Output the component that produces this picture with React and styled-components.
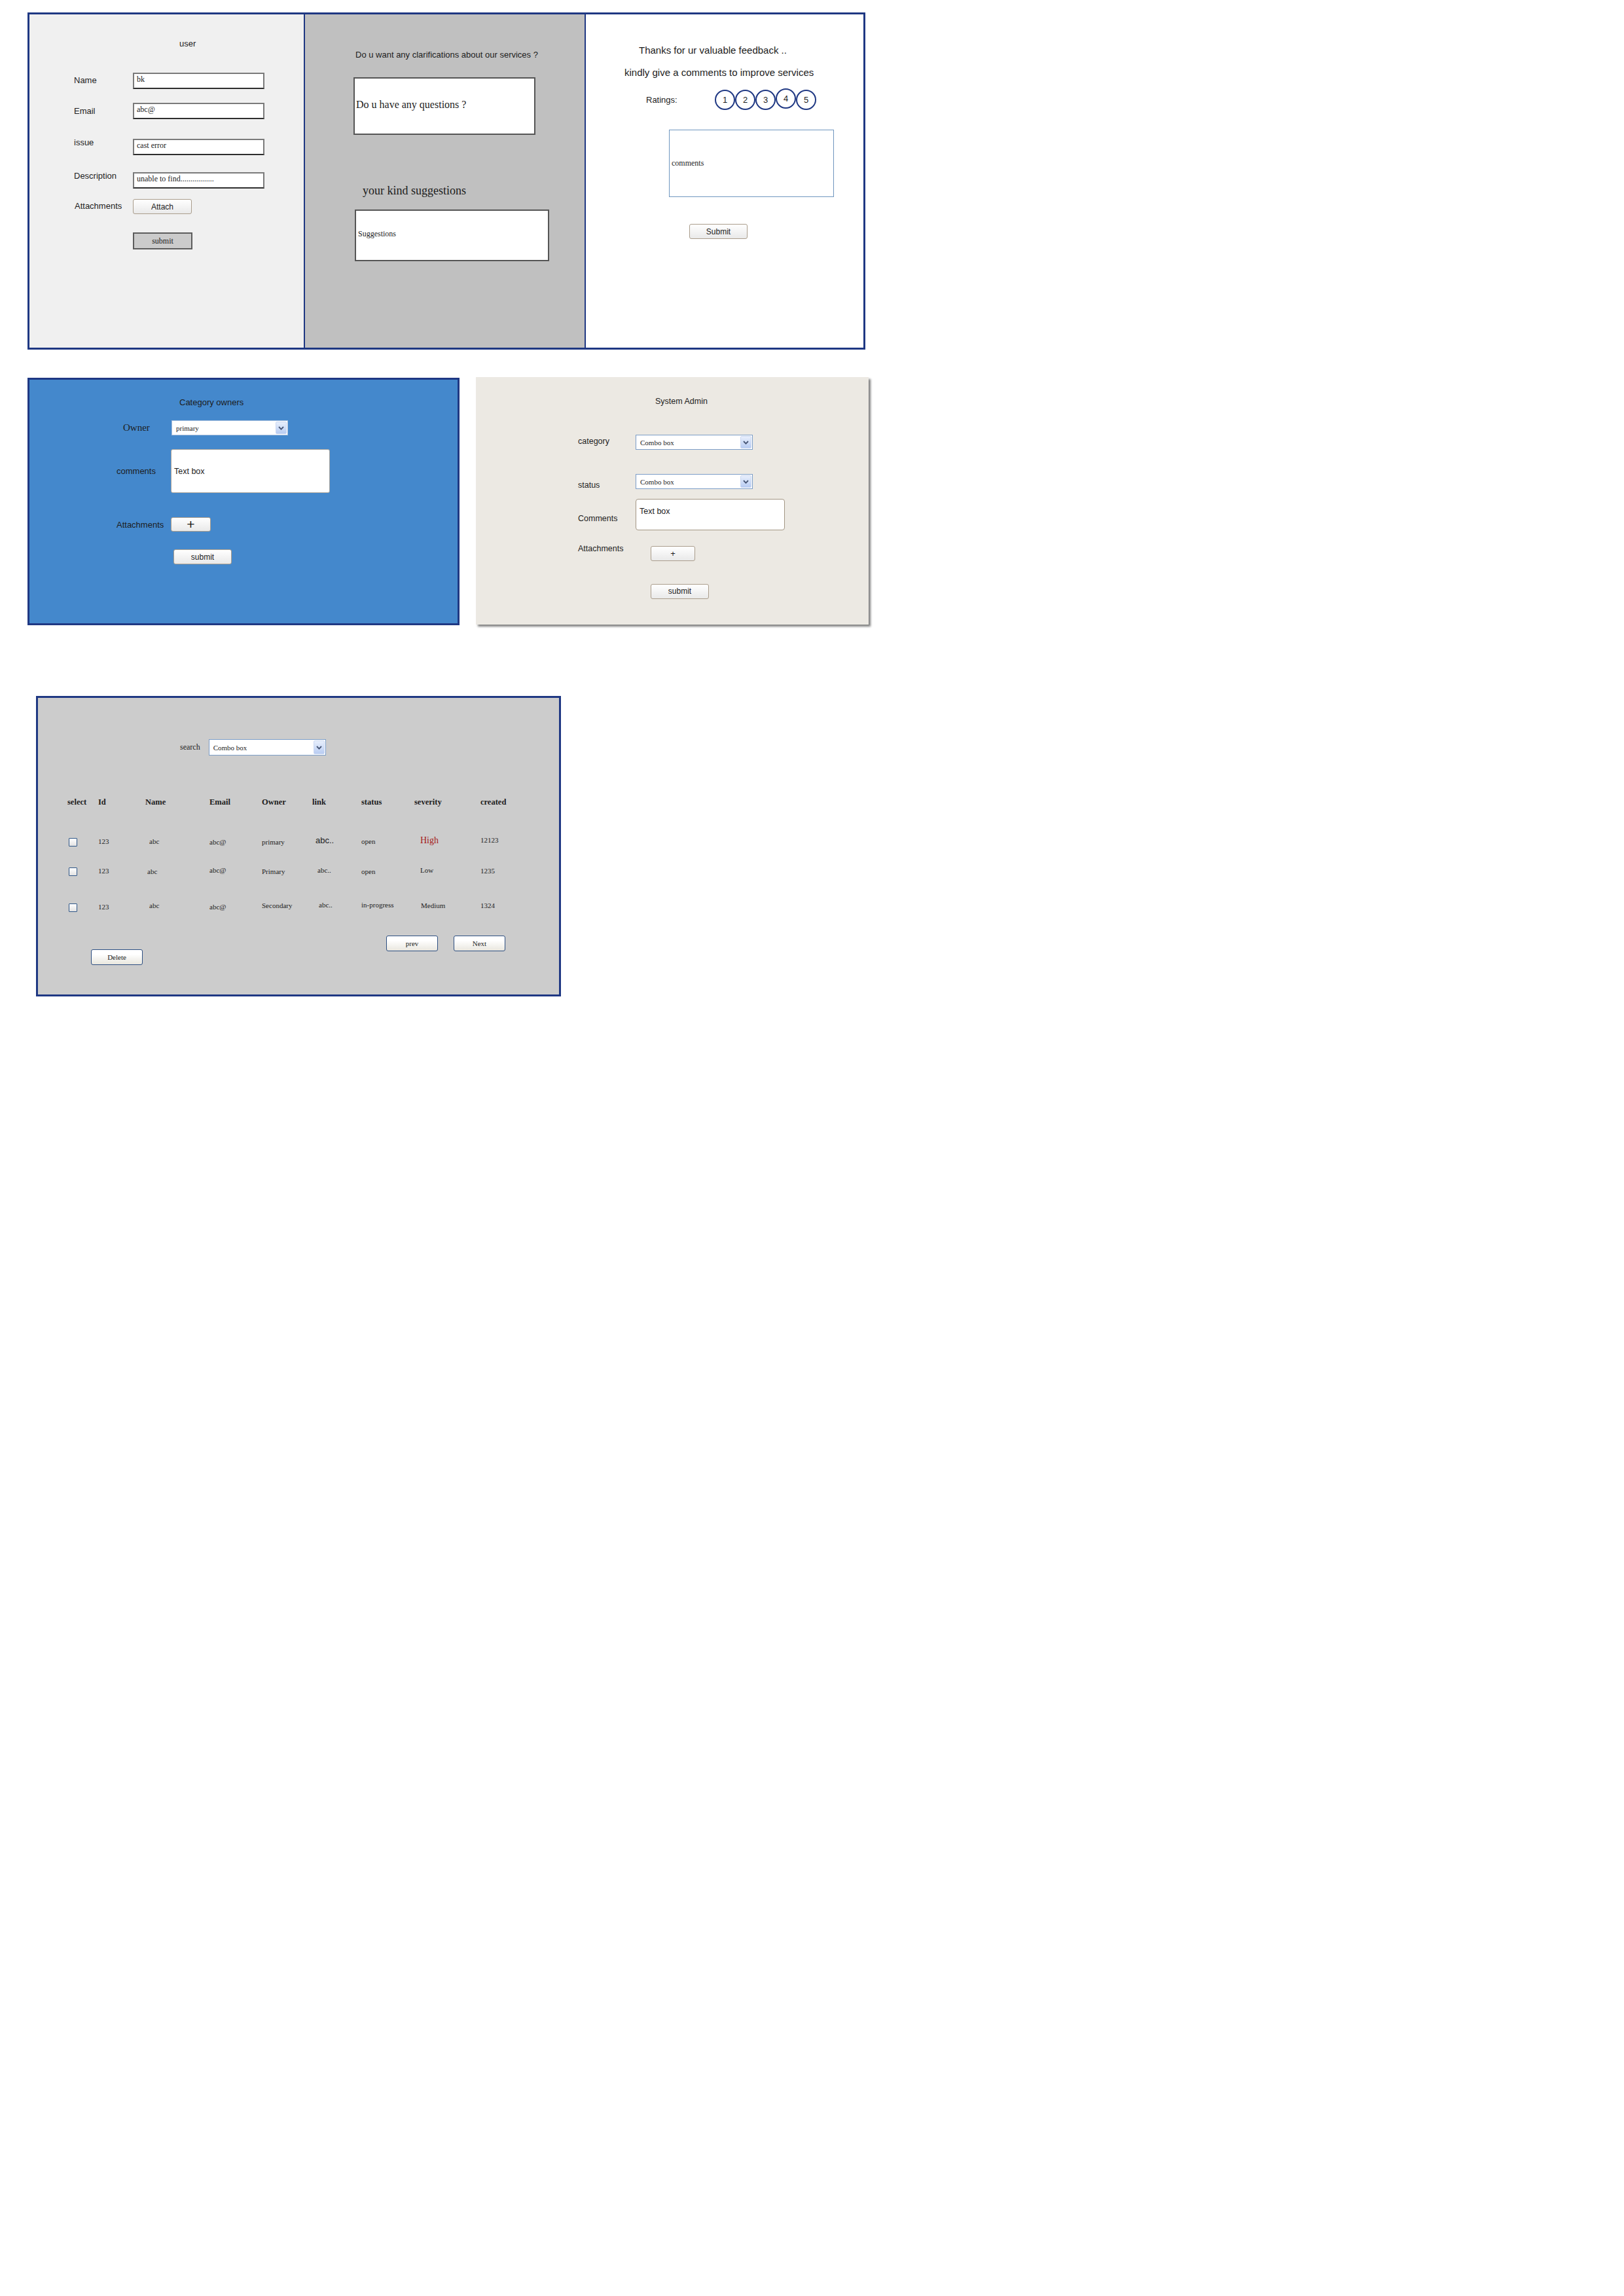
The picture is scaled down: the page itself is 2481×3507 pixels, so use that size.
import React from "react";
import styled, { createGlobalStyle, css } from "styled-components";

const SANS = `"Liberation Sans", Arial, sans-serif`;
const SERIF = `"Liberation Serif", "Times New Roman", serif`;
const NAVY = "#1f3883";

const GlobalStyle = createGlobalStyle`
  html, body {
    margin: 0;
    background: #fff;
  }
  body {
    font-family: ${SANS};
    color: #1c1c1c;
  }
  *, *::before, *::after {
    box-sizing: border-box;
  }
`;

const Page = styled.div`
  width: 2481px;
  min-height: 3507px;
  padding: 19px 0 0 42px;
  display: flex;
  flex-direction: column;
  align-items: flex-start;
`;

/* ---------- shared bits ---------- */

const Caption = styled.p`
  margin: ${(p) => p.$mt || 0}px 0 0 ${(p) => p.$ml || 0}px;
  font-family: ${(p) => (p.$serif ? SERIF : SANS)};
  font-size: ${(p) => p.$size || 13}px;
  line-height: ${(p) => p.$lh || 15}px;
  white-space: nowrap;
`;

const PushButton = styled.div`
  width: ${(p) => p.$w}px;
  height: ${(p) => p.$h}px;
  margin: ${(p) => p.$mt || 0}px 0 0 ${(p) => p.$ml || 0}px;
  display: flex;
  align-items: center;
  justify-content: center;
  flex-shrink: 0;
  font-family: ${(p) => (p.$serif ? SERIF : SANS)};
  font-size: ${(p) => p.$size || 12}px;
  color: #1c1c1c;
  ${(p) =>
    p.$variant === "gray" &&
    css`
      background: #cbcbcb;
      border: 2px solid #5c5c5c;
    `}
  ${(p) =>
    p.$variant === "tan" &&
    css`
      background: linear-gradient(#ffffff, #e9e9e9);
      border: 1px solid #aa9d8c;
      border-radius: 3px;
    `}
  ${(p) =>
    p.$variant === "blue" &&
    css`
      background: linear-gradient(#ffffff 30%, #e8e6de);
      border: 1.5px solid #2d4f82;
      border-radius: 3px;
    `}
`;

const ComboShell = styled.div`
  display: flex;
  align-items: stretch;
  width: ${(p) => p.$w}px;
  height: ${(p) => p.$h}px;
  padding: 1px;
  background: #fff;
  border: ${(p) => p.$bw || 1}px solid ${(p) => p.$border || "#7f9dc6"};
  flex-shrink: 0;
`;

const ComboText = styled.span`
  flex: 1;
  display: flex;
  align-items: center;
  padding-left: 5px;
  font-family: ${SERIF};
  font-size: 11px;
  color: #222;
`;

const ComboArrow = styled.span`
  width: 17px;
  display: flex;
  align-items: center;
  justify-content: center;
  background: linear-gradient(#e8effc, #b8ccf2);
  border: 1px solid #cbd8f2;
  border-radius: 2px;
`;

const Combo = ({ value, w = 179, h = 23, border, bw }) => (
  <ComboShell $w={w} $h={h} $border={border} $bw={bw}>
    <ComboText>{value}</ComboText>
    <ComboArrow>
      <svg width="9" height="6" viewBox="0 0 9 6">
        <polyline
          points="1,1 4.5,4.6 8,1"
          fill="none"
          stroke="#475675"
          strokeWidth="1.8"
        />
      </svg>
    </ComboArrow>
  </ComboShell>
);

/* ---------- top frame ---------- */

const TopFrame = styled.section`
  display: grid;
  grid-template-columns: 421px 429px 424px;
  width: 1280px;
  height: 515px;
  border: 3px solid ${NAVY};
`;

const Column = styled.div`
  display: flex;
  flex-direction: column;
  align-items: flex-start;
  background: ${(p) => p.$bg};
  border-right: ${(p) => (p.$divider ? `2px solid ${NAVY}` : "none")};
`;

const FormRow = styled.div`
  display: flex;
  align-items: ${(p) => (p.$center ? "center" : "flex-start")};
  margin: ${(p) => p.$mt || 0}px 0 0 ${(p) => p.$ml || 0}px;
`;

const FieldLabel = styled.span`
  width: ${(p) => p.$w}px;
  margin-top: ${(p) => p.$dy || 0}px;
  padding-left: ${(p) => p.$pl || 0}px;
  font-family: ${(p) => (p.$serif ? SERIF : SANS)};
  font-size: ${(p) => p.$size || 13}px;
  line-height: ${(p) => p.$lh || 15}px;
  flex-shrink: 0;
  white-space: nowrap;
`;

const SketchInput = styled.div`
  width: 201px;
  height: 25px;
  padding: 1px 0 0 4px;
  background: #fff;
  border: 2px solid #7a7a7a;
  border-bottom-color: #2e2e2e;
  font-family: ${SERIF};
  font-size: 12px;
  line-height: 14px;
  white-space: nowrap;
`;

const NoteBox = styled.div`
  width: ${(p) => p.$w}px;
  height: ${(p) => p.$h}px;
  margin: ${(p) => p.$mt}px 0 0 ${(p) => p.$ml}px;
  display: flex;
  align-items: center;
  padding: 0 0 ${(p) => p.$pb || 0}px ${(p) => p.$pl || 2}px;
  background: #fff;
  border: ${(p) => p.$border || "2px solid #555"};
  border-radius: ${(p) => p.$radius || 0}px;
  font-family: ${(p) => (p.$sans ? SANS : SERIF)};
  font-size: ${(p) => p.$size}px;
  white-space: nowrap;
`;

const RatingRow = styled.div`
  display: flex;
  align-items: center;
  margin: 18.5px 0 0 92px;
`;

const Circles = styled.div`
  display: flex;
`;

const Circle = styled.span`
  width: 31px;
  height: 31px;
  margin-top: ${(p) => p.$dy || 0}px;
  border-radius: 50%;
  border: 2.5px solid ${NAVY};
  display: flex;
  align-items: center;
  justify-content: center;
  font-size: 13px;
  color: #1c1c1c;
  background: #fff;
`;

const UserColumn = () => (
  <Column $bg="#f0f0f0" $divider>
    <Caption $mt={36.5} $ml={229}>
      user
    </Caption>
    <FormRow $mt={37.5} $ml={68}>
      <FieldLabel $w={90} $dy={3.5}>Name</FieldLabel>
      <SketchInput>bk</SketchInput>
    </FormRow>
    <FormRow $mt={21} $ml={68}>
      <FieldLabel $w={90} $dy={4.5}>Email</FieldLabel>
      <SketchInput>abc@</SketchInput>
    </FormRow>
    <FormRow $mt={30} $ml={68}>
      <FieldLabel $w={90} $dy={-2.5}>issue</FieldLabel>
      <SketchInput>cast error</SketchInput>
    </FormRow>
    <FormRow $mt={26} $ml={68}>
      <FieldLabel $w={90} $dy={-2.5}>Description</FieldLabel>
      <SketchInput>unable to find.................</SketchInput>
    </FormRow>
    <FormRow $mt={16} $ml={69}>
      <FieldLabel $w={89} $dy={2.5}>Attachments</FieldLabel>
      <PushButton $variant="tan" $w={90} $h={23}>
        Attach
      </PushButton>
    </FormRow>
    <PushButton $variant="gray" $serif $w={91} $h={26} $mt={28} $ml={158}>
      submit
    </PushButton>
  </Column>
);

const QuestionColumn = () => (
  <Column $bg="#c0c0c0" $divider>
    <Caption $mt={53.5} $ml={77}>
      Do u want any clarifications about our services ?
    </Caption>
    <NoteBox $w={278} $h={88} $mt={27.5} $ml={74} $size={16} $pb={4}>
      Do u have any questions ?
    </NoteBox>
    <Caption $serif $size={18} $lh={21} $mt={74.5} $ml={88}>
      your kind suggestions
    </Caption>
    <NoteBox $w={297} $h={79} $mt={18.5} $ml={76} $size={12} $pl={3} $pb={4}>
      Suggestions
    </NoteBox>
  </Column>
);

const FeedbackColumn = () => (
  <Column $bg="#ffffff">
    <Caption $size={15} $lh={17} $mt={45.5} $ml={81}>
      Thanks for ur valuable feedback ..
    </Caption>
    <Caption $size={15} $lh={17} $mt={17} $ml={59}>
      kindly give a comments to improve services
    </Caption>
    <RatingRow>
      <FieldLabel $w={105}>Ratings:</FieldLabel>
      <Circles>
        {[1, 2, 3, 4, 5].map((n) => (
          <Circle key={n} $dy={n === 4 ? -2 : 0}>
            {n}
          </Circle>
        ))}
      </Circles>
    </RatingRow>
    <NoteBox
      $w={252}
      $h={103}
      $mt={30}
      $ml={127}
      $size={12}
      $pl={3}
      $border="1px solid #6f96bf"
    >
      comments
    </NoteBox>
    <PushButton $variant="tan" $w={89} $h={23} $mt={41} $ml={158}>
      Submit
    </PushButton>
  </Column>
);

/* ---------- middle row ---------- */

const MiddleRow = styled.div`
  display: flex;
  gap: 25px;
  margin-top: 43px;
`;

const OwnersPanel = styled.section`
  width: 660px;
  height: 378px;
  display: flex;
  flex-direction: column;
  align-items: flex-start;
  background: #4488cc;
  border: 3px solid ${NAVY};
`;

const AdminPanel = styled.section`
  width: 600px;
  height: 378px;
  margin-top: -1px;
  display: flex;
  flex-direction: column;
  align-items: flex-start;
  background: #ece9e3;
  box-shadow: 3px 3px 3px rgba(0, 0, 0, 0.5);
`;

const OwnersCard = () => (
  <OwnersPanel>
    <Caption $mt={26.5} $ml={229}>
      Category owners
    </Caption>
    <FormRow $center $mt={20.5} $ml={133}>
      <FieldLabel $w={84} $pl={10} $serif $size={15} $lh={17}>
        Owner
      </FieldLabel>
      <Combo value="primary" w={178} border="#a9bfdc" />
    </FormRow>
    <FormRow $center $mt={21} $ml={133}>
      <FieldLabel $w={83}>comments</FieldLabel>
      <NoteBox
        $w={243}
        $h={67}
        $mt={0}
        $ml={0}
        $sans
        $size={12.5}
        $pl={4}
        $radius={3}
        $border="1px solid #a8a49c"
      >
        Text box
      </NoteBox>
    </FormRow>
    <FormRow $center $mt={37} $ml={133}>
      <FieldLabel $w={83}>Attachments</FieldLabel>
      <PushButton $variant="tan" $w={61} $h={22} $size={21}>
        +
      </PushButton>
    </FormRow>
    <PushButton $variant="tan" $w={89} $h={23} $mt={27} $ml={220}>
      submit
    </PushButton>
  </OwnersPanel>
);

const AdminCard = () => (
  <AdminPanel>
    <Caption $size={12.5} $mt={29.5} $ml={274}>
      System Admin
    </Caption>
    <FormRow $mt={43.5} $ml={156}>
      <FieldLabel $w={88} $size={12.5} $dy={2.5}>
        category
      </FieldLabel>
      <Combo value="Combo box" w={179} bw={1.5} border="#7b9dc7" />
    </FormRow>
    <FormRow $mt={37} $ml={156}>
      <FieldLabel $w={88} $size={12.5} $dy={9.5}>
        status
      </FieldLabel>
      <Combo value="Combo box" w={179} bw={1.5} border="#7b9dc7" />
    </FormRow>
    <FormRow $mt={13} $ml={156}>
      <FieldLabel $w={88} $size={12.5} $dy={23.5}>
        Comments
      </FieldLabel>
      <NoteBox
        $w={228}
        $h={48}
        $mt={0}
        $ml={0}
        $sans
        $size={12.5}
        $pl={5}
        $pb={10}
        $radius={4}
        $border="1px solid #a39684"
      >
        Text box
      </NoteBox>
    </FormRow>
    <FormRow $mt={24} $ml={156}>
      <FieldLabel $w={88} $size={12.5} $dy={-2.5}>
        Attachments
      </FieldLabel>
      <PushButton $variant="tan" $w={68} $h={23} $ml={23} $size={13}>
        +
      </PushButton>
    </FormRow>
    <PushButton $variant="tan" $w={89} $h={23} $mt={35} $ml={267}>
      submit
    </PushButton>
  </AdminPanel>
);

/* ---------- issue list ---------- */

const ListPanel = styled.section`
  width: 802px;
  height: 459px;
  margin: 108px 0 0 13px;
  display: flex;
  flex-direction: column;
  align-items: flex-start;
  background: #cccccc;
  border: 3px solid ${NAVY};
`;

const SearchRow = styled.div`
  display: flex;
  align-items: center;
  margin: 63px 0 0 217px;
`;

const SearchLabel = styled.span`
  margin-right: 13px;
  font-family: ${SERIF};
  font-size: 12px;
`;

const COLS = "47px 72px 98px 80px 77px 75px 81px 101px 80px";

const TableRow = styled.div`
  display: grid;
  grid-template-columns: ${COLS};
  height: ${(p) => p.$h}px;
  margin: ${(p) => p.$mt}px 0 0 45px;
`;

const HeadCell = styled.span`
  font-family: ${SERIF};
  font-weight: bold;
  font-size: 12.5px;
  line-height: 15px;
  white-space: nowrap;
`;

const DataCell = styled.span`
  height: 20px;
  padding-top: ${(p) => (20 - p.$size * 1.2) / 2 + (p.$dy || 0)}px;
  padding-left: ${(p) => p.$dx || 0}px;
  font-family: ${(p) => (p.$sans ? SANS : SERIF)};
  font-size: ${(p) => p.$size}px;
  line-height: ${(p) => p.$size * 1.2}px;
  color: ${(p) => p.$color || "#222"};
  white-space: nowrap;
`;

const CheckBox = styled.span`
  display: block;
  width: 13px;
  height: 13px;
  margin: 3.5px 0 0 2px;
  border: 1.5px solid #2f5687;
  border-radius: 1px;
  background: linear-gradient(#ffffff, #e2e2e2);
`;

const Footer = styled.div`
  display: flex;
  align-items: flex-start;
  margin-top: 33px;
`;

const PagerGroup = styled.div`
  display: flex;
  gap: 24px;
  margin-left: 372px;
`;

const headers = ["select", "Id", "Name", "Email", "Owner", "link", "status", "severity", "created"];

const issues = [
  {
    mt: 43.5,
    cells: [
      { text: "123", dx: -3 },
      { text: "abc", dx: 6 },
      { text: "abc@", dy: 1 },
      { text: "primary", dy: 1 },
      { text: "abc..", dx: 5, dy: -2, sans: true, size: 13 },
      { text: "open" },
      { text: "High", dx: 9, dy: -2, size: 14, color: "#a51b1b" },
      { text: "12123", dx: -1, dy: -2 },
    ],
  },
  {
    mt: 25,
    cells: [
      { text: "123", dx: -3 },
      { text: "abc", dx: 3, dy: 1 },
      { text: "abc@", dy: -1 },
      { text: "Primary", dy: 1 },
      { text: "abc..", dx: 8, dy: -1 },
      { text: "open", dy: 1 },
      { text: "Low", dx: 9, dy: -1 },
      { text: "1235" },
    ],
  },
  {
    mt: 35,
    cells: [
      { text: "123", dx: -3 },
      { text: "abc", dx: 6, dy: -2 },
      { text: "abc@" },
      { text: "Secondary", dy: -2 },
      { text: "abc..", dx: 10, dy: -7 },
      { text: "in-progress", dy: -7 },
      { text: "Medium", dx: 10, dy: -2 },
      { text: "1324", dy: -2 },
    ],
  },
];

const IssueList = () => (
  <ListPanel>
    <SearchRow>
      <SearchLabel>search</SearchLabel>
      <Combo value="Combo box" w={179} h={25} bw={1.5} border="#7b9dc7" />
    </SearchRow>
    <TableRow $h={15} $mt={63.5}>
      {headers.map((h) => (
        <HeadCell key={h}>{h}</HeadCell>
      ))}
    </TableRow>
    {issues.map((row, i) => (
      <TableRow key={i} $h={20} $mt={row.mt}>
        <span>
          <CheckBox />
        </span>
        {row.cells.map((c, j) => (
          <DataCell
            key={j}
            $dx={c.dx}
            $dy={c.dy}
            $sans={c.sans}
            $size={c.size || 11}
            $color={c.color}
          >
            {c.text}
          </DataCell>
        ))}
      </TableRow>
    ))}
    <Footer>
      <PushButton $variant="blue" $serif $size={11} $w={79} $h={24} $mt={21} $ml={81}>
        Delete
      </PushButton>
      <PagerGroup>
        <PushButton $variant="blue" $serif $size={11} $w={79} $h={24}>
          prev
        </PushButton>
        <PushButton $variant="blue" $serif $size={11} $w={79} $h={24}>
          Next
        </PushButton>
      </PagerGroup>
    </Footer>
  </ListPanel>
);

const App = () => (
  <>
    <GlobalStyle />
    <Page>
      <TopFrame>
        <UserColumn />
        <QuestionColumn />
        <FeedbackColumn />
      </TopFrame>
      <MiddleRow>
        <OwnersCard />
        <AdminCard />
      </MiddleRow>
      <IssueList />
    </Page>
  </>
);

export default App;
